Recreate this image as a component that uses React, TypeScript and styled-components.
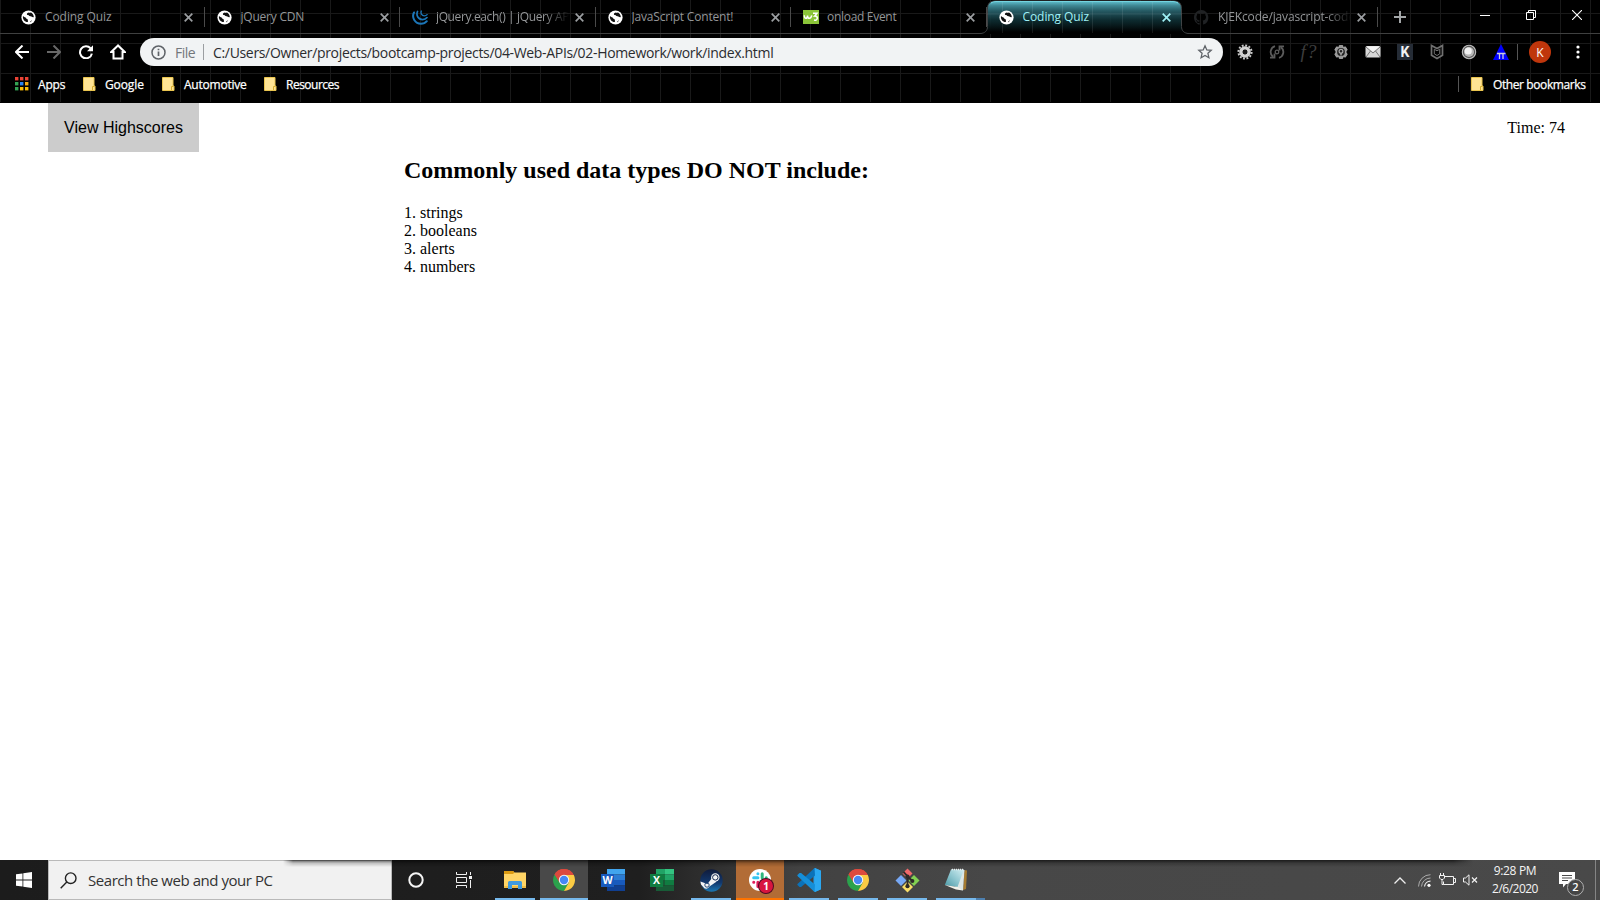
import React from 'react';
import styled, { createGlobalStyle, css } from 'styled-components';

const ui = '"Open Sans", "Noto Sans", sans-serif';

const GlobalStyle = createGlobalStyle`
  * { box-sizing: border-box; }
  body { margin: 0; background: #fff; overflow: hidden; }
  button { font: inherit; border: 0; padding: 0; background: none; color: inherit; }
  svg { display: block; flex: none; }
`;

const Screen = styled.div`
  display: flex;
  flex-direction: column;
  width: 1600px;
  height: 900px;
`;

const Label = styled.span<{ $track?: number }>`
  letter-spacing: ${(p) => p.$track ?? 0}px;
  white-space: pre;
`;

/* ---------- browser frame ---------- */

const Chrome = styled.header`
  height: 103px;
  flex: none;
  font-family: ${ui};
  color: #fff;
  background-color: #000;
  background-image: linear-gradient(90deg, #191919 1px, transparent 1px),
    linear-gradient(#191919 1px, transparent 1px);
  background-size: 30px 30px;
  background-position: 0 0, 0 13px;
  border-bottom: 1px solid #000;
`;

const TabStrip = styled.div`
  display: flex;
  height: 34px;
  padding-left: 9px;
  background: linear-gradient(#3f4040, #3f4040) 0 33px / 100% 1px no-repeat;
`;

const TabBox = styled.div<{ $active?: boolean }>`
  position: relative;
  display: flex;
  align-items: center;
  width: 195.5px;
  height: 34px;
  padding: 0 11px 0 12px;
  font-size: 12px;
  color: #949698;
  ${(p) =>
    p.$active
      ? css`
          color: #9ff0f5;
        `
      : css`
          &::after {
            content: '';
            width: 1px;
            height: 20px;
            position: absolute;
            right: 0;
            top: 7px;
            background: #4a4a4a;
          }
        `}
`;

const ActiveShape = styled.svg`
  position: absolute;
  left: -8px;
  top: 0;
`;

const TabFace = styled.div<{ $gap: number }>`
  position: relative;
  display: flex;
  align-items: center;
  gap: ${(p) => p.$gap}px;
  width: 159px;
  overflow: hidden;
`;

const TabTitle = styled(Label)<{ $fade?: boolean }>`
  position: relative;
  top: -0.5px;
  width: 135px;
  overflow: hidden;
  line-height: 18px;
  ${(p) => p.$fade && 'mask-image: linear-gradient(90deg, #000 108px, transparent 133px);'}
`;

const CloseButton = styled.button`
  position: relative;
  display: grid;
  place-items: center;
  width: 9px;
  height: 16px;
  margin-left: 4px;
`;

const NewTab = styled.button`
  width: 44px;
  height: 34px;
  display: grid;
  place-items: center;
`;

const WindowButtons = styled.div`
  display: flex;
  height: 29px;
  margin-left: auto;
`;

const WindowButton = styled.button`
  width: 46px;
  display: grid;
  place-items: center;
`;

const Toolbar = styled.div`
  display: flex;
  align-items: center;
  height: 36px;
  padding-left: 6px;
`;

const NavButton = styled.button`
  width: 32px;
  height: 32px;
  display: grid;
  place-items: center;
`;

const AddressBar = styled.div`
  display: flex;
  align-items: center;
  width: 1083px;
  height: 28px;
  margin-left: 6px;
  padding: 0 10px 0 11px;
  border-radius: 14px;
  background: #f1f3f4;
  color: #2b2c2f;
  font-size: 14px;
`;

const Scheme = styled(Label)`
  width: 28px;
  margin-left: 9px;
  color: #73777b;
`;

const Rule = styled.i<{ $h: number; $color: string }>`
  width: 1px;
  height: ${(p) => p.$h}px;
  background: ${(p) => p.$color};
`;

const Url = styled(Label)`
  flex: 1;
  margin-left: 9px;
`;

const Extensions = styled.div`
  display: flex;
  margin-left: 6px;
`;

const Avatar = styled.div`
  display: grid;
  place-items: center;
  width: 22px;
  height: 22px;
  margin: 0 11px 0 11px;
  border-radius: 50%;
  background: #bf360c;
  font-size: 12px;
`;

const BookmarksBar = styled.div`
  display: flex;
  align-items: center;
  height: 28px;
  padding: 0 15px;
  font-size: 12px;
`;

const Bookmark = styled.div<{ $w: number; $gap?: number }>`
  display: flex;
  align-items: center;
  gap: ${(p) => p.$gap ?? 9}px;
  width: ${(p) => p.$w}px;
  color: #fff;
  -webkit-text-stroke: 0.25px #fff;
`;

const OtherBookmarks = styled.div`
  display: flex;
  align-items: center;
  gap: 12px;
  margin-left: auto;
`;

/* ---------- quiz page ---------- */

const Page = styled.main`
  flex: 1;
  background: #fff;
  color: #000;
  font: 16px/18px "Liberation Serif", "Times New Roman", serif;
`;

const PageTop = styled.div`
  display: flex;
  justify-content: space-between;
  height: 49px;
  padding: 0 35px 0 48px;
`;

const ScoresButton = styled.button`
  width: 151px;
  height: 49px;
  background: #ccc;
  font: 16px/48px "Liberation Sans", Arial, sans-serif;
`;

const Timer = styled.div`
  padding-top: 16px;
`;

const Question = styled.section`
  margin-left: 404px;
`;

const Heading = styled.h2`
  margin: 4px 0 20px;
  font-size: 24px;
  line-height: 28px;
`;

const Answers = styled.ol`
  margin: 0;
  padding: 0;
  list-style-position: inside;
  list-style-type: none;
`;

/* ---------- taskbar ---------- */

const Taskbar = styled.footer`
  position: relative;
  display: flex;
  height: 40px;
  flex: none;
  font-family: ${ui};
  color: #fff;
  background: linear-gradient(90deg, #1c1c1c 0, #1f1f1f 640px, #2b2b2b 690px, #424242 800px, #474747 990px, #494949 100%);
`;

const TopShade = styled.div`
  position: absolute;
  left: 283px;
  top: 0;
  width: 1190px;
  height: 7px;
  background: linear-gradient(rgba(0, 0, 0, 0.62), rgba(0, 0, 0, 0.2) 45%, transparent);
  mask-image: linear-gradient(90deg, transparent, #000 10px, #000 1170px, transparent);
`;

const StartButton = styled.button`
  width: 48px;
  display: grid;
  place-items: center;
`;

const SearchBox = styled.div`
  display: flex;
  align-items: center;
  width: 344px;
  padding-left: 11px;
  gap: 11px;
  border: 1px solid #b9b9b9;
  background: #f1f1f1;
  color: #333;
  font-size: 15px;
`;

const Apps = styled.div`
  display: flex;
  gap: 1px;
`;

const SystemButton = styled.button`
  width: 48px;
  display: grid;
  place-items: center;
`;

const AppButton = styled.button<{ $bg?: string; $line?: string; $full?: boolean }>`
  position: relative;
  width: 48px;
  display: grid;
  place-items: center;
  background: ${(p) => p.$bg ?? 'transparent'};
  &::after {
    content: '';
    position: absolute;
    bottom: 0;
    left: ${(p) => (p.$full ? 0 : 4)}px;
    right: ${(p) => (p.$full ? 0 : 4)}px;
    height: 2px;
    background: ${(p) => p.$line ?? 'transparent'};
  }
`;

const StackedLine = styled.i`
  position: absolute;
  right: -5px;
  bottom: 0;
  width: 9px;
  height: 2px;
  background: #4d80b0;
`;

const Badge = styled.span`
  position: absolute;
  left: 23px;
  top: 19px;
  width: 14px;
  height: 14px;
  border-radius: 50%;
  background: #d8143f;
  box-shadow: 0 0 0 1px #4d0a22;
  font: 700 10px/14px ${ui};
  text-align: center;
`;

const Tray = styled.div`
  display: flex;
  align-items: center;
  margin-left: auto;
`;

const TrayIcon = styled.span<{ $w: number }>`
  display: grid;
  place-items: center;
  width: ${(p) => p.$w}px;
`;

const Clock = styled.div`
  display: flex;
  flex-direction: column;
  align-items: center;
  width: 64px;
  font-size: 12px;
  line-height: 18px;
  color: #f4f4f4;
`;

const Notifications = styled.div`
  position: relative;
  width: 48px;
  height: 40px;
  padding: 12px 0 0 12px;
`;

const NoticeCount = styled.span`
  position: absolute;
  left: 20px;
  top: 19px;
  width: 17px;
  height: 17px;
  border: 1px solid #b0b0b0;
  border-radius: 50%;
  background: #454545;
  font-size: 11px;
  line-height: 14px;
  font-weight: 600;
  text-align: center;
`;

/* ---------- drawings ---------- */

const Globe = () => (
  <svg width="15" height="15" viewBox="0 0 15 15">
    <circle cx="7.5" cy="7.5" r="7.1" fill="#fff" />
    <path d="M2 6c1.2 1.5 2.6 1 3.2 2.2.3.8 1 .8 1.6 1.2.5.5-.3 1.6.2 2.6-3 .3-5.7-2.6-5-6zM6 3.4c1.4-1 2.7-.3 4-.8 1.5.7 2.7 2.2 2.8 4.4-1.6.7-2-.9-3.4-.7-1.6 0-1.2-1.1-2.3-1.2C6.300 5 5.600 4.300 6 3.400z" fill="#111" />
    <path d="M9 12.300c.2-1.300 1.600-1.300 2.200-2.600-.3 1.200-1.100 2.100-2.200 2.600z" fill="#111" />
  </svg>
);

const JQuery = () => (
  <svg width="16" height="15" viewBox="0 0 16 15" fill="none" stroke="#1c76b8" strokeLinecap="round">
    <path d="M2 2.500C-.6 7.500 3 13.800 9 13.800c2.500 0 4.500-1 5.800-2.600" strokeWidth="2" />
    <path d="M5.500 1.500C3.800 5.500 6.400 9.600 10.500 9.600c2 0 3.500-.7 4.500-2" strokeWidth="1.700" />
    <path d="M9.300 1c-.9 2.600.6 4.800 3 4.800 1.200 0 2.100-.4 2.800-1.200" strokeWidth="1.300" />
  </svg>
);

const W3 = () => (
  <svg width="16" height="14" viewBox="0 0 16 14">
    <rect width="16" height="14" fill="#8bc539" />
    <path d="M1.300 5.300c.1 4 3 3.800 3.200.3.200 3.800 3.500 3.500 4.200-.3M10 3.200h4L11.700 6c3.800-.3 3.300 5-.7 4.100" fill="none" stroke="#fff" strokeWidth="1.500" />
  </svg>
);

const GitHub = () => (
  <svg width="15" height="15" viewBox="0 0 16 16">
    <path fill="#202224" d="M8 0C3.600 0 0 3.600 0 8c0 3.500 2.300 6.500 5.500 7.600.4.1.5-.2.5-.4v-1.500c-2 .5-2.700-.5-2.900-1-.1-.3-.5-1-.9-1.200-.3-.2-.7-.6 0-.6.600 0 1.100.6 1.200.8.7 1.200 1.900.9 2.300.7.1-.5.300-.9.500-1.100-1.800-.2-3.600-.9-3.600-4 0-.9.300-1.600.8-2.100-.1-.2-.4-1 .1-2.100 0 0 .7-.2 2.200.8a7.500 7.500 0 0 1 4 0c1.500-1 2.200-.8 2.200-.8.4 1.100.2 1.900.1 2.100.5.6.8 1.300.8 2.100 0 3.100-1.900 3.800-3.600 4 .3.200.5.700.5 1.500v2.200c0 .2.100.5.500.4A8 8 0 0 0 8 0z" />
  </svg>
);

const Cross = ({ color }: { color: string }) => (
  <svg width="9" height="9" viewBox="0 0 9 9" stroke={color} strokeWidth="1.700">
    <path d="M.7.700l7.600 7.600M8.300.700L.7 8.300" />
  </svg>
);

const ActiveTabShape = () => (
  <ActiveShape width="211" height="34" viewBox="0 0 211 34">
    <defs>
      <linearGradient id="tabGlow" x1="0" y1="0" x2="0" y2="1">
        <stop offset="0" stopColor="#62c3d2" />
        <stop offset=".14" stopColor="#3f8894" />
        <stop offset=".3" stopColor="#28606a" stopOpacity=".95" />
        <stop offset=".6" stopColor="#0f3136" stopOpacity=".85" />
        <stop offset=".95" stopColor="#000" />
      </linearGradient>
    </defs>
    <rect x="3" y="32" width="205" height="2" fill="#000" />
    <path d="M1 33.500c5 0 7.500-3 7.500-7V8.500q0-7.500 7.500-7.500h179q7.500 0 7.500 7.500v18c0 4 2.500 7 7.500 7" fill="url(#tabGlow)" stroke="#3f4244" />
    <path d="M12 3q2-1.500 5-1.500h177q3 0 5 1.500" fill="none" stroke="#74d4e0" strokeWidth="1" />
    <path d="M8 14h195M23.500 2v31M53.500 2v31M83.500 2v31M113.500 2v31M143.500 2v31M173.500 2v31" stroke="#fff" strokeOpacity=".09" />
  </ActiveShape>
);

const Arrow = ({ flip, color }: { flip?: boolean; color: string }) => (
  <svg width="14" height="14" viewBox="0 0 14 14" fill="none" stroke={color} strokeWidth="2">
    <path d={flip ? 'M0 7h13M6.500.500L13 7l-6.500 6.500' : 'M14 7H1M7.500.500L1 7l6.500 6.500'} />
  </svg>
);

const Reload = () => (
  <svg width="14" height="14" viewBox="0 0 14 14">
    <path d="M11.600 3.400A6 6 0 1 0 12.900 8.600" fill="none" stroke="#fff" strokeWidth="2" />
    <path d="M14 .2v6H8z" fill="#fff" />
  </svg>
);

const Home = () => (
  <svg width="16" height="16" viewBox="0 0 16 16">
    <path d="M8 1.500L1.300 8H3.500v6.500h9V8h2.200z" fill="none" stroke="#fff" strokeWidth="2" />
  </svg>
);

const Info = () => (
  <svg width="15" height="15" viewBox="0 0 15 15">
    <circle cx="7.500" cy="7.500" r="6.500" fill="none" stroke="#5f6368" strokeWidth="1.500" />
    <path d="M7.500 6.500V11M7.500 3.700v1.600" stroke="#5f6368" strokeWidth="1.700" />
  </svg>
);

const Star = () => (
  <svg width="16" height="16" viewBox="0 0 16 16">
    <path d="M8 1.800l1.800 4.100 4.400.4-3.300 3 1 4.400L8 11.400l-3.900 2.300 1-4.400-3.300-3 4.400-.4z" fill="none" stroke="#5f6368" strokeWidth="1.300" />
  </svg>
);

const Gear = () => (
  <svg width="16" height="16" viewBox="0 0 16 16">
    <circle cx="8" cy="8" r="6.600" fill="none" stroke="#c9c9c9" strokeWidth="2" strokeDasharray="1.900 1.556" />
    <circle cx="8" cy="8" r="4.100" fill="none" stroke="#d2d2d2" strokeWidth="3.400" />
    <circle cx="8" cy="8" r="2.300" fill="#181818" />
  </svg>
);

const Refresh = () => (
  <svg width="16" height="16" viewBox="0 0 16 16" fill="none" stroke="#5b5b5b" strokeWidth="1.800">
    <path d="M6 2.200a6 6 0 0 0-2 10.500M1 13.700h4.500V9.500M10 13.800a6 6 0 0 0 2-10.500M15 2.300h-4.500v4.200" />
    <circle cx="8" cy="8" r="1.800" strokeWidth="1.300" />
  </svg>
);

const FnMark = styled.span`
  font: italic 19px/16px "Liberation Serif", serif;
  color: #3d3d3d;
  letter-spacing: 1px;
`;

const Cog = () => (
  <svg width="16" height="16" viewBox="0 0 16 16">
    <path d="M6.300 1.500h3.400l.5 2 2.200-.7 1.800 2.800L12.800 8l1.400 2.300-1.800 2.900-2.200-.7-.5 2H6.300l-.5-2-2.200.7-1.800-2.900L3.200 8 1.800 5.600l1.800-2.800 2.200.7z" fill="#989898" stroke="#b9b9b9" strokeWidth=".7" />
    <circle cx="8" cy="8" r="3.900" fill="#222" />
    <circle cx="8" cy="7.200" r="1.900" fill="none" stroke="#aaa" strokeWidth="1.200" />
    <path d="M8 9v2.500" stroke="#aaa" strokeWidth="1.500" />
  </svg>
);

const Mail = () => (
  <svg width="16" height="14" viewBox="0 0 16 14">
    <rect x=".5" y="1" width="15" height="11.500" rx="1.500" fill="#d8d8d8" />
    <path d="M1 2l7 6 7-6M1 12l4.500-6M15 12l-4.500-6" fill="none" stroke="#777" strokeWidth="1" />
    <path d="M1.500 1.500h13L8 7z" fill="#f3f3f3" />
  </svg>
);

const KBox = styled.span`
  width: 16px;
  height: 16px;
  background: #252c36;
  color: #f3f3f3;
  font: 700 14px/16px Roboto, sans-serif;
  text-align: center;
`;

const Shield = () => (
  <svg width="14" height="16" viewBox="0 0 14 16" fill="none" stroke="#707070">
    <path d="M1.500 1.500L7 4.600l5.500-3.100v9.700L7 14.500l-5.500-3.300z" strokeWidth="1.700" />
    <path d="M4.300 5.200v4.600L7 11.500l2.700-1.700V5.200L7 6.800z" strokeWidth="1" />
  </svg>
);

const Orb = () => (
  <svg width="16" height="16" viewBox="0 0 16 16">
    <circle cx="8" cy="8" r="6.700" fill="#555" stroke="#bdbdbd" strokeWidth="1.100" />
    <circle cx="8" cy="8" r="5" fill="#b8b8b8" />
    <circle cx="7.200" cy="7" r="3.600" fill="#f2f2f2" />
  </svg>
);

const PiTriangle = () => (
  <svg width="16" height="16" viewBox="0 0 16 16">
    <path d="M8 0l8 16H0z" fill="#0000fe" />
    <path d="M4 9.500h8.500M6.500 9.500V15M10 9.500V15" stroke="#ccd" strokeWidth="1.300" />
  </svg>
);

const AppsGrid = () => (
  <svg width="14" height="14" viewBox="0 0 14 14">
    {['#ea4335', '#ea4335', '#ea4335', '#34a353', '#2a82f0', '#f5a912', '#34a353', '#fbbc05', '#fbbc05'].map((c, i) => (
      <rect key={i} x={(i % 3) * 5} y={Math.floor(i / 3) * 5} width="3.400" height="3.400" fill={c} />
    ))}
  </svg>
);

const Folder = () => (
  <svg width="13" height="14" viewBox="0 0 13 14">
    <path d="M.5.500h10.500v8.500h1v4.500H.5z" fill="#ffe494" stroke="#eac54f" />
    <path d="M9.500 13v-3.500h2" fill="none" stroke="#d8ae2f" />
  </svg>
);

const WindowsLogo = () => (
  <svg width="16" height="16" viewBox="0 0 16 16" fill="#fff">
    <path d="M0 2.300l6.500-.9v6.200H0zM7.300 1.300L16 0v7.600H7.300zM0 8.400h6.500v6.200L0 13.700zM7.300 8.400H16V16l-8.700-1.200z" />
  </svg>
);

const Magnifier = () => (
  <svg width="17" height="17" viewBox="0 0 17 17" fill="none" stroke="#222" strokeWidth="1.400">
    <circle cx="10.700" cy="6.200" r="5.300" />
    <path d="M6.800 10L.7 16.200" />
  </svg>
);

const Cortana = () => (
  <svg width="16" height="16" viewBox="0 0 16 16">
    <circle cx="8" cy="8" r="6.700" fill="none" stroke="#f5f5f5" strokeWidth="2" />
  </svg>
);

const TaskView = () => (
  <svg width="16" height="16" viewBox="0 0 16 16" fill="none" stroke="#f0f0f0">
    <path d="M.5 0v2.500h10V0M.5 16v-2.500h10V16M.5 5.500h10v5H.5zM14.500 0v3M14.500 8v8" />
    <rect x="13" y="4" width="3" height="3" fill="#f0f0f0" stroke="none" />
  </svg>
);

const Explorer = () => (
  <svg width="22" height="18" viewBox="0 0 22 18">
    <path d="M0 0h9l1.500 1.500H22V17H0z" fill="#ffd566" />
    <path d="M0 0h9l1.500 1.500L9 3H0z" fill="#dc9b12" />
    <path d="M0 15h22v2H0z" fill="#efbd45" />
    <path d="M4 11.500q0-1.500 1.500-1.500h11q1.500 0 1.500 1.500V18h-4v-4H8v4H4z" fill="#3f9ade" />
  </svg>
);

const ChromeLogo = () => (
  <svg width="22" height="22" viewBox="0 0 22 22">
    <path d="M11 11L1.500 5.500A11 11 0 0 1 20.500 5.500z" fill="#e0493c" />
    <path d="M11 11L1.500 5.500A11 11 0 0 0 11 22l5-8z" fill="#2ba24c" />
    <path d="M11 6h9.800A11 11 0 0 1 11 22l4.800-8.500z" fill="#fbcb43" />
    <path d="M1.500 5.500A11 11 0 0 1 20.800 6H11l-4.500 7.500z" fill="#dc4a3e" />
    <circle cx="11" cy="11" r="5.200" fill="#f5f7fb" />
    <circle cx="11" cy="11" r="4.200" fill="#4688f4" />
  </svg>
);

const OfficeMark = styled.span<{ $color: string }>`
  position: absolute;
  left: 12px;
  top: 14px;
  width: 13px;
  height: 13px;
  background: ${(p) => p.$color};
  font: 700 10.5px/13px ${ui};
  text-align: center;
`;

const OfficePages = ({ colors }: { colors: string[] }) => (
  <svg width="24" height="22" viewBox="0 0 24 22">
    {colors.map((c, i) => (
      <rect key={i} x="6" y={i * 5.500} width="18" height="5.500" fill={c} />
    ))}
  </svg>
);

const ExcelPages = () => (
  <svg width="24" height="22" viewBox="0 0 24 22">
    <path d="M6 0h9v5.500H6z" fill="#21a366" />
    <path d="M15 0h9v5.500h-9z" fill="#33c481" />
    <path d="M6 5.500h9V11H6z" fill="#107c41" />
    <path d="M15 5.500h9V11h-9z" fill="#21a366" />
    <path d="M6 11h9v5.500H6z" fill="#185c37" />
    <path d="M15 11h9v5.500h-9z" fill="#107c41" />
    <path d="M6 16.500h18V22H6z" fill="#185c37" />
  </svg>
);

const Steam = () => (
  <svg width="23" height="23" viewBox="0 0 23 23">
    <defs>
      <linearGradient id="steam" x1="0" y1="0" x2="0" y2="1">
        <stop offset="0" stopColor="#101b3b" />
        <stop offset=".6" stopColor="#12386d" />
        <stop offset="1" stopColor="#1b78b4" />
      </linearGradient>
    </defs>
    <circle cx="11.500" cy="11.500" r="11.200" fill="url(#steam)" />
    <path d="M.4 12.500l7 2.500 5-6.500 4 4.200-7 4.800a3.500 3.500 0 0 1-6.300.3L1 15.500z" fill="#f4f4f4" />
    <circle cx="15.300" cy="8.400" r="4.200" fill="#f4f4f4" />
    <circle cx="15.300" cy="8.400" r="2.700" fill="#f4f4f4" stroke="#14264f" strokeWidth="1" />
    <circle cx="7" cy="16" r="2.200" fill="none" stroke="#14386b" strokeWidth=".9" />
  </svg>
);

const Slack = () => (
  <svg width="22" height="22" viewBox="0 0 22 22" strokeLinecap="round" strokeWidth="3">
    <circle cx="11" cy="11" r="11" fill="#fff" />
    <path d="M4.700 8.700h4.200M8.900 4.700v.1" stroke="#36c5f0" />
    <path d="M13.200 4.700v4.200M17.200 8.800h.1" stroke="#2eb67d" />
    <path d="M8.900 13.200v4.200M4.700 13.200h.1" stroke="#e01e5a" />
    <path d="M13.200 13.200h4.200M13.200 17.400v.1" stroke="#ecb22e" />
  </svg>
);

const VSCode = () => (
  <svg width="24" height="24" viewBox="0 0 24 24">
    <path d="M17.500 0L24 2.800v18.400L17.500 24l-1-1.500v-21z" fill="#26a3ee" />
    <path d="M17.500 0L1 15.500l-.8 1.300L2.500 19l1.600-.1L18 7.500z" fill="#0b72b9" />
    <path d="M17.500 24L1 8.500l-.8-1.300L2.500 5l1.600.1L18 16.500z" fill="#158ed8" />
    <path d="M18 0l6 2.800v18.400L18 24z" fill="#2ba8f1" />
  </svg>
);

const Git = () => (
  <svg width="25" height="25" viewBox="0 0 25 25">
    <path d="M12.500.500l5 5-5 5-5-5z" fill="#f0696b" />
    <path d="M6 7l5.500 5.500L6 18 .5 12.500z" fill="#77a8f5" />
    <path d="M19 7l5.500 5.500L19 18l-5.500-5.500z" fill="#82d152" />
    <path d="M12.500 13.500L18 19l-5.500 5.500L7 19z" fill="#f8dd68" />
    <path d="M8.500 4L12.500 8v10M12.500 8.500l5 4.500" fill="none" stroke="#2d2a28" strokeWidth="1.800" />
    <circle cx="12.500" cy="8.500" r="2.100" fill="#2d2a28" />
    <circle cx="17.300" cy="13" r="2.100" fill="#2d2a28" />
    <circle cx="12.500" cy="18.200" r="2.100" fill="#2d2a28" />
  </svg>
);

const Notepad = () => (
  <svg width="24" height="24" viewBox="0 0 24 24">
    <defs>
      <linearGradient id="note" x1="1" y1="0" x2="0" y2="1">
        <stop offset="0" stopColor="#d4eff2" />
        <stop offset=".5" stopColor="#8fc7d0" />
        <stop offset="1" stopColor="#4a98a5" />
      </linearGradient>
    </defs>
    <path d="M20.500 2l2.500.5L22 21l-3 1z" fill="#a57b31" />
    <path d="M7 1.500L20.500 2l-1.500 20.500L12 20z" fill="#dce6e5" />
    <path d="M7 1.500h13L13.500 19 .8 17z" fill="url(#note)" />
    <path d="M.8 17l12.700 2 5.500 3.500-7-1z" fill="#f2f2ea" />
    <path d="M8 1.500h12" stroke="#eee" strokeDasharray="1 1" strokeWidth="1.500" />
  </svg>
);

const Wifi = () => (
  <svg width="13" height="13" viewBox="0 0 13 13" fill="none">
    <path d="M.5 12.500A12 12 0 0 1 12.500.700M3.500 12.500a9 9 0 0 1 9-8.500" stroke="#aaa" strokeWidth="1" />
    <path d="M6.500 12.500a6 6 0 0 1 6-5.300" stroke="#e8e8e8" strokeWidth="1.200" />
    <circle cx="11" cy="11.300" r="1.600" fill="#fff" />
  </svg>
);

const Battery = () => (
  <svg width="17" height="14" viewBox="0 0 17 14" fill="none" stroke="#f2f2f2">
    <path d="M6 3.500h8.500v8H4.500V8.500M15 5.500h1.500v4H15" />
    <path d="M1.500 0v3M4.500 0v3M.5 2.500h5V5L4 6.500H2L.5 5zM3 6.500v5h1.500" />
  </svg>
);

const Volume = () => (
  <svg width="15" height="12" viewBox="0 0 15 12" fill="none" stroke="#f2f2f2">
    <path d="M.5 4h2L6 .8v10.400L2.500 8h-2z" />
    <path d="M9 3.500l5 5M14 3.500l-5 5" strokeWidth="1.200" />
  </svg>
);

type TabInfo = { title: string; icon: React.ReactNode; track: number; active?: boolean; fade?: boolean; gap?: number };

const tabs: TabInfo[] = [
  { title: 'Coding Quiz', icon: <Globe />, track: -0.08 },
  { title: 'jQuery CDN', icon: <Globe />, track: -0.22 },
  { title: 'jQuery.each() | jQuery API', icon: <JQuery />, track: -0.37, fade: true, gap: 8 },
  { title: 'JavaScript Content!', icon: <Globe />, track: -0.2 },
  { title: 'onload Event', icon: <W3 />, track: -0.3, gap: 8 },
  { title: 'Coding Quiz', icon: <Globe />, track: -0.08, active: true },
  { title: 'KJEKcode/javascript-code', icon: <GitHub />, track: -0.15, fade: true },
];

const Tab = ({ tab }: { tab: TabInfo }) => (
  <TabBox $active={tab.active}>
    {tab.active && <ActiveTabShape />}
    <TabFace $gap={tab.gap ?? 9}>
      {tab.icon}
      <TabTitle $track={tab.track} $fade={tab.fade}>{tab.title}</TabTitle>
    </TabFace>
    <CloseButton aria-label="Close"><Cross color={tab.active ? '#9ff0f5' : '#9b9ea1'} /></CloseButton>
  </TabBox>
);

const extensions = [<Gear />, <Refresh />, <FnMark>f?</FnMark>, <Cog />, <Mail />, <KBox>K</KBox>, <Shield />, <Orb />, <PiTriangle />];

const line = '#76b9ed';

export default function App() {
  return (
    <Screen>
      <GlobalStyle />
      <Chrome>
        <TabStrip>
          {tabs.map((tab, i) => <Tab key={i} tab={tab} />)}
          <NewTab aria-label="New tab">
            <svg width="12" height="12" viewBox="0 0 12 12" stroke="#a3a6a8" strokeWidth="2"><path d="M6 0v12M0 6h12" /></svg>
          </NewTab>
          <WindowButtons>
            <WindowButton aria-label="Minimize">
              <svg width="10" height="10" viewBox="0 0 10 10" stroke="#fff"><path d="M0 5.500h10" /></svg>
            </WindowButton>
            <WindowButton aria-label="Restore">
              <svg width="10" height="10" viewBox="0 0 10 10" fill="none" stroke="#fff"><path d="M.5 2.500h7v7h-7zM2.500 2.500v-2h7v7h-2" /></svg>
            </WindowButton>
            <WindowButton aria-label="Close window">
              <svg width="10" height="10" viewBox="0 0 10 10" stroke="#fff" strokeWidth="1.100"><path d="M0 0l10 10M10 0L0 10" /></svg>
            </WindowButton>
          </WindowButtons>
        </TabStrip>
        <Toolbar>
          <NavButton aria-label="Back"><Arrow color="#fff" /></NavButton>
          <NavButton aria-label="Forward"><Arrow flip color="#686868" /></NavButton>
          <NavButton aria-label="Reload"><Reload /></NavButton>
          <NavButton aria-label="Home"><Home /></NavButton>
          <AddressBar>
            <Info />
            <Scheme $track={-0.5}>File</Scheme>
            <Rule $h={16} $color="#9b9ea1" />
            <Url $track={-0.33}>C:/Users/Owner/projects/bootcamp-projects/04-Web-APIs/02-Homework/work/index.html</Url>
            <Star />
          </AddressBar>
          <Extensions>
            {extensions.map((icon, i) => <NavButton key={i}>{icon}</NavButton>)}
          </Extensions>
          <Rule $h={16} $color="#555" />
          <Avatar>K</Avatar>
          <NavButton as="span">
            <svg width="4" height="14" viewBox="0 0 4 14" fill="#fff"><circle cx="2" cy="2" r="1.600" /><circle cx="2" cy="7" r="1.600" /><circle cx="2" cy="12" r="1.600" /></svg>
          </NavButton>
        </Toolbar>
        <BookmarksBar>
          <Bookmark $w={68}><AppsGrid /><Label $track={-0.2}>Apps</Label></Bookmark>
          <Bookmark $w={79}><Folder /><Label $track={-0.1}>Google</Label></Bookmark>
          <Bookmark $w={102}><Folder /><Label $track={-0.22}>Automotive</Label></Bookmark>
          <Bookmark $w={90}><Folder /><Label $track={-0.5}>Resources</Label></Bookmark>
          <OtherBookmarks>
            <Rule $h={16} $color="#555" />
            <Bookmark $w={114}><Folder /><Label $track={-0.4}>Other bookmarks</Label></Bookmark>
          </OtherBookmarks>
        </BookmarksBar>
      </Chrome>

      <Page>
        <PageTop>
          <ScoresButton>View Highscores</ScoresButton>
          <Timer>Time: 74</Timer>
        </PageTop>
        <Question>
          <Heading>Commonly used data types DO NOT include:</Heading>
          <Answers>
            <li>1. strings</li>
            <li>2. booleans</li>
            <li>3. alerts</li>
            <li>4. numbers</li>
          </Answers>
        </Question>
      </Page>

      <Taskbar>
        <StartButton aria-label="Start"><WindowsLogo /></StartButton>
        <SearchBox><Magnifier /><Label $track={-0.45}>Search the web and your PC</Label></SearchBox>
        <SystemButton><Cortana /></SystemButton>
        <SystemButton><TaskView /></SystemButton>
        <TrayIcon $w={3} />
        <Apps>
          <AppButton $line={line}><Explorer /></AppButton>
          <AppButton $bg="#494949" $line={line} $full><ChromeLogo /></AppButton>
          <AppButton><OfficePages colors={['#41a5ee', '#2b7cd3', '#185abd', '#103f91']} /><OfficeMark $color="#185abd">W</OfficeMark></AppButton>
          <AppButton><ExcelPages /><OfficeMark $color="#107c41">X</OfficeMark></AppButton>
          <AppButton $line={line}><Steam /></AppButton>
          <AppButton $bg="#b26c36" $line="#ff7300" $full><Slack /><Badge>1</Badge></AppButton>
          <AppButton $line={line}><VSCode /></AppButton>
          <AppButton $line={line}><ChromeLogo /></AppButton>
          <AppButton $line={line}><Git /></AppButton>
          <AppButton $line={line}><Notepad /><StackedLine /></AppButton>
        </Apps>
        <Tray>
          <TrayIcon $w={25}>
            <svg width="12" height="7" viewBox="0 0 12 7" fill="none" stroke="#eee" strokeWidth="1.300"><path d="M.5 6.500L6 1l5.500 5.500" /></svg>
          </TrayIcon>
          <TrayIcon $w={24}><Wifi /></TrayIcon>
          <TrayIcon $w={22}><Battery /></TrayIcon>
          <TrayIcon $w={25}><Volume /></TrayIcon>
          <Clock>
            <Label $track={-0.35}>9:28 PM</Label>
            <Label $track={-0.5}>2/6/2020</Label>
          </Clock>
          <Notifications>
            <svg width="16" height="16" viewBox="0 0 16 16"><path d="M0 0h16v12H7l-3 3.500V12H0z" fill="#fff" /><path d="M3 3.500h10M3 6h10M3 8.500h6" stroke="#4a4a4a" /></svg>
            <NoticeCount>2</NoticeCount>
          </Notifications>
          <Rule $h={40} $color="#858585" />
          <TrayIcon $w={4} />
        </Tray>
        <TopShade />
      </Taskbar>
    </Screen>
  );
}
